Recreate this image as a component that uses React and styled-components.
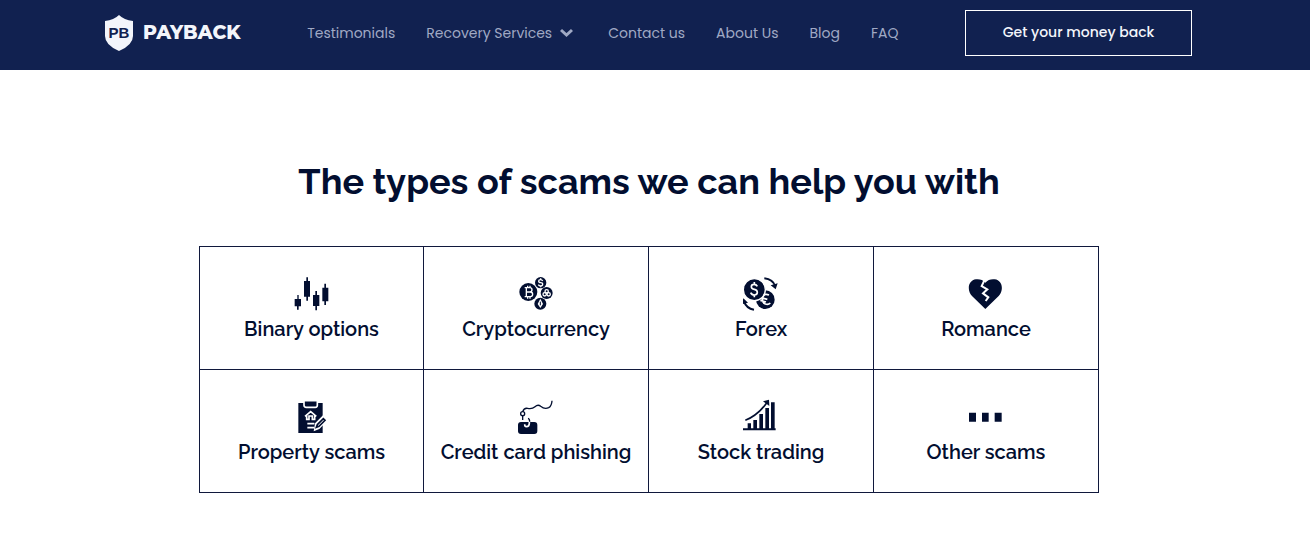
import styled, { createGlobalStyle } from 'styled-components';

const Color = {
  NAVY: '#112150',
  INK: '#020e30',
  LINE: '#10183c',
  WHITE: '#ffffff',
  OFF_WHITE: '#f3f5fb',
  MUTED: '#a0a9c4',
};

const GlobalStyle = createGlobalStyle`
  * {
    box-sizing: border-box;
  }

  body {
    margin: 0;
    background-color: ${Color.WHITE};
    color: ${Color.INK};
    font-family: Poppins, Inter, sans-serif;
  }
`;

const StyledHeader = styled.header`
  padding: 10px 118px 14px 105px;
  background-color: ${Color.NAVY};

  @media (max-width: 1200px) {
    padding: 10px 24px 14px;
  }
`;

const StyledBar = styled.div`
  display: flex;
  flex-wrap: wrap;
  align-items: center;
  justify-content: space-between;
  gap: 16px;
`;

const StyledLogo = styled.a`
  display: flex;
  align-items: center;
  gap: 10px;
  color: ${Color.OFF_WHITE};
  font-family: Montserrat, Inter, sans-serif;
  font-size: 19px;
  font-weight: 800;
  line-height: 24px;
  text-decoration: none;
`;

const StyledShield = styled.svg`
  width: 28px;
  height: 36px;
`;

const StyledShieldText = styled.text`
  fill: ${Color.NAVY};
  font-family: 'Liberation Sans', sans-serif;
  font-size: 15px;
  font-weight: 700;
`;

const StyledMenu = styled.nav`
  display: flex;
  flex-wrap: wrap;
  align-items: center;
  gap: 31px;
`;

const StyledMenuLink = styled.a`
  display: flex;
  align-items: center;
  gap: 8px;
  color: ${Color.MUTED};
  font-size: 14px;
  line-height: 20px;
  text-decoration: none;
  padding-right: ${({ $dropdown }) => ($dropdown ? '4px' : '0')};
`;

const StyledChevron = styled.svg`
  width: 13px;
  height: 10px;
`;

const StyledCallButton = styled.button`
  width: 227px;
  height: 46px;
  border: 1px solid ${Color.WHITE};
  padding: 0 16px 2px;
  background-color: transparent;
  color: ${Color.OFF_WHITE};
  font-family: inherit;
  font-size: 14px;
  font-weight: 500;
  cursor: pointer;
`;

const StyledMain = styled.main`
  display: grid;
  justify-items: center;
  gap: 40px;
  padding: 86px 24px 48px 12px;
`;

const StyledTitle = styled.h1`
  margin: 0;
  font-family: Raleway, Lato, sans-serif;
  font-size: 36px;
  font-weight: 700;
  line-height: 50px;
  text-align: center;
`;

const StyledScams = styled.ul`
  display: grid;
  grid-template-columns: repeat(4, 1fr);
  width: 100%;
  max-width: 900px;
  margin: 0;
  border-top: 1px solid ${Color.LINE};
  padding: 0;
  list-style: none;

  @media (max-width: 768px) {
    grid-template-columns: repeat(2, 1fr);
  }
`;

const StyledScam = styled.li`
  display: grid;
  justify-items: center;
  gap: 2px;
  border: solid ${Color.LINE};
  border-width: 0 1px 1px 0;
  padding: 29px 8px 24px;

  &:nth-child(4n + 1) {
    border-left-width: 1px;
  }

  @media (max-width: 768px) {
    &:nth-child(2n + 1) {
      border-left-width: 1px;
    }
  }
`;

const StyledScamIcon = styled.svg`
  width: 36px;
  height: 36px;
  fill: ${Color.INK};
`;

const StyledScamName = styled.h2`
  margin: 0;
  font-family: Raleway, Lato, sans-serif;
  font-size: 20px;
  font-weight: 600;
  line-height: 31px;
  text-align: center;
`;

const LINKS = [
  { name: 'Testimonials' },
  { name: 'Recovery Services', dropdown: true },
  { name: 'Contact us' },
  { name: 'About Us' },
  { name: 'Blog' },
  { name: 'FAQ' },
];

const candles = (
  <>
    <path d='M38 75h4v12h7v22h-7v10h-5v-10h-7V87h8z' />
    <path d='M65 22h5v11h6v47h-6v12h-5V80h-7V33h7z' />
    <path d='M92 63h5v12h7v33h-7v13h-5v-13h-7V75h7z' />
    <path d='M119 41h5v12h7v41h-7v11h-5V94h-6V53h6z' />
  </>
);

const coins = (
  <>
    <circle cx='59' cy='66' r='27' />
    <circle cx='96' cy='38' r='17' />
    <circle cx='114' cy='69' r='18' />
    <circle cx='95' cy='101' r='18' />
    <g fill='none' stroke={Color.WHITE} strokeWidth='4'>
      <path d='M48 53h15q7 0 7 6t-7 7H52h13q7 0 7 7t-7 7H48M53 53v27M57 47v6M64 47v6M57 80v6M64 80v6' />
      <path d='M102 33q-2-4-6-4-6 0-6 4 0 5 6 5t6 5q0 5-6 5-5 0-7-4M96 25v4M96 48v4' />
      <circle cx='114' cy='64' r='5' />
      <circle cx='108' cy='73' r='5' />
      <circle cx='120' cy='73' r='5' />
    </g>
    <path d='M95 86l-8 16 8 12 8-12z' fill={Color.WHITE} />
    <path d='M95 95v11' stroke={Color.INK} strokeWidth='3' />
  </>
);

const exchange = (
  <>
    <circle cx='95' cy='89' r='28' />
    <path
      d='M106 75q-13-6-18 5-7 15 7 22 9 3 15-3M83 83l18 5M80 91l17 5'
      fill='none'
      stroke={Color.WHITE}
      strokeWidth='5'
    />
    <circle cx='62' cy='59' r='33' stroke={Color.WHITE} strokeWidth='4' />
    <path
      d='M71 49q-3-6-10-6-8 0-8 7 0 6 9 8 9 2 9 9 0 8-9 8-8 0-11-7M62 36v7M62 75v7'
      fill='none'
      stroke={Color.WHITE}
      strokeWidth='5'
    />
    <path
      d='M92 25q26 3 32 23M61 119q-23-4-30-25'
      fill='none'
      stroke={Color.INK}
      strokeWidth='6'
    />
    <path d='M111 46l21-6-6 18zM24 103l5-18 14 13z' />
  </>
);

const brokenHeart = (
  <>
    <path d='M80 117L40 78C24 61 28 31 52 28q17-2 28 10 11-12 28-10c24 3 28 33 12 50z' />
    <path
      d='M77 31l-8 17 17 10-13 12 16 12-8 11'
      fill='none'
      stroke={Color.WHITE}
      strokeWidth='6'
    />
  </>
);

const clipboard = (
  <>
    <path d='M41 27h73v90H41z' />
    <path
      d='M58 20h40v14q0 6-6 6H65q-7 0-7-6z'
      stroke={Color.WHITE}
      strokeWidth='5'
    />
    <path
      d='M61 67l17-14 17 14M66 64v12h7V66h10v10h7V64M68 89h21M68 101h21'
      fill='none'
      stroke={Color.WHITE}
      strokeWidth='5'
    />
    <path d='M91 88l24-24 16 13-27 28-17 7z' fill={Color.WHITE} />
    <path d='M98 92l18-18 5 5-18 18-8 3z' fill={Color.WHITE} stroke={Color.INK} strokeWidth='5' />
  </>
);

const phishing = (
  <>
    <rect x='28' y='84' width='58' height='36' rx='9' />
    <path
      d='M62 82v6q0 10-9 10-5 0-5-7'
      fill='none'
      stroke={Color.WHITE}
      strokeWidth='5'
    />
    <path
      d='M42 78V66M58 73q5 1 5 10M42 53q4-12 15-10 13 3 22-5 9-8 17-1 12 10 24 4 9-5 10-21'
      fill='none'
      stroke={Color.INK}
      strokeWidth='4'
    />
    <circle cx='42' cy='59' r='6' fill={Color.WHITE} stroke={Color.INK} strokeWidth='4' />
  </>
);

const growth = (
  <>
    <path d='M27 103h99v6H27zM42 88h10v16H42zM59 78h11v26H59zM77 60h11v44H77zM95 42h11v62H95zM112 25h11v79h-11z' />
    <path d='M35 79Q72 64 99 27' fill='none' stroke={Color.INK} strokeWidth='5' />
    <path d='M88 22l18-5 1 19z' />
  </>
);

const dots = <path d='M31 56h21v27H31zM70 56h20v27H70zM108 56h21v27h-21z' />;

const SCAMS = [
  { name: 'Binary options', icon: candles, viewBox: '28 18 108 108' },
  { name: 'Cryptocurrency', icon: coins, viewBox: '28 18 108 108' },
  { name: 'Forex', icon: exchange, viewBox: '28 18 108 108' },
  { name: 'Romance', icon: brokenHeart, viewBox: '28 18 108 108' },
  { name: 'Property scams', icon: clipboard, viewBox: '28 15 108 108' },
  { name: 'Credit card phishing', icon: phishing, viewBox: '28 15 108 108' },
  { name: 'Stock trading', icon: growth, viewBox: '28 15 108 108' },
  { name: 'Other scams', icon: dots, viewBox: '28 15 108 108' },
];

function Logo() {
  return (
    <StyledLogo href='#'>
      <StyledShield viewBox='0 0 28 36' aria-hidden='true'>
        <path d='M14 0q5 5 14 6v15q0 9-14 15Q0 30 0 21V6q9-1 14-6z' fill={Color.OFF_WHITE} />
        <StyledShieldText x='14' y='23' textAnchor='middle'>
          PB
        </StyledShieldText>
      </StyledShield>
      PAYBACK
    </StyledLogo>
  );
}

function MenuLink({ name, dropdown }) {
  return (
    <StyledMenuLink href='#' $dropdown={dropdown}>
      {name}
      {dropdown && (
        <StyledChevron viewBox='0 0 13 10' aria-hidden='true'>
          <path d='M1 2l5.5 5L12 2' fill='none' stroke='currentColor' strokeWidth='3' />
        </StyledChevron>
      )}
    </StyledMenuLink>
  );
}

function Scam({ name, icon, viewBox }) {
  return (
    <StyledScam>
      <StyledScamIcon viewBox={viewBox} aria-hidden='true'>
        {icon}
      </StyledScamIcon>
      <StyledScamName>{name}</StyledScamName>
    </StyledScam>
  );
}

function App() {
  return (
    <>
      <GlobalStyle />
      <StyledHeader>
        <StyledBar>
          <Logo />
          <StyledMenu>
            {LINKS.map((link) => (
              <MenuLink key={link.name} {...link} />
            ))}
          </StyledMenu>
          <StyledCallButton type='button'>Get your money back</StyledCallButton>
        </StyledBar>
      </StyledHeader>
      <StyledMain>
        <StyledTitle>The types of scams we can help you with</StyledTitle>
        <StyledScams>
          {SCAMS.map((scam) => (
            <Scam key={scam.name} {...scam} />
          ))}
        </StyledScams>
      </StyledMain>
    </>
  );
}

export default App;
